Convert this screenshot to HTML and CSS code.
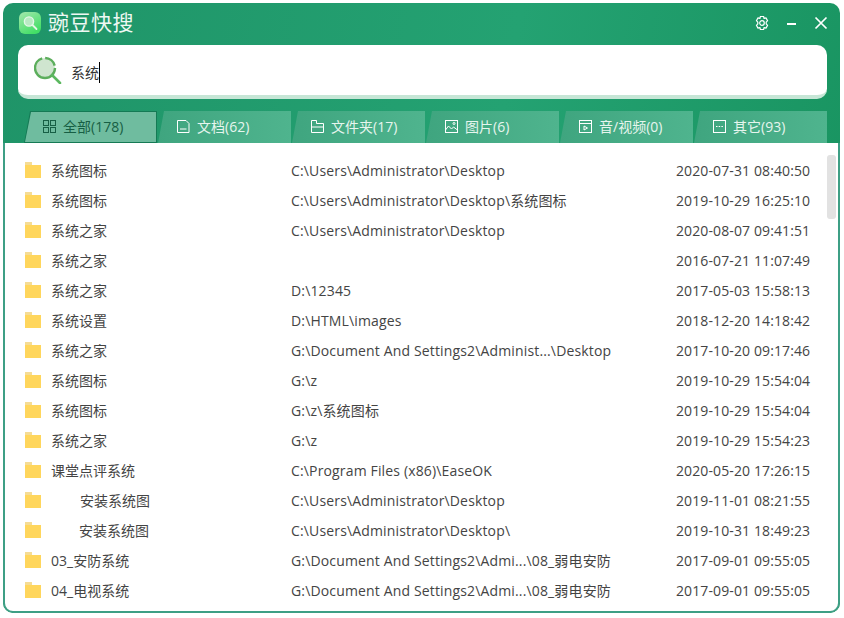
FILE: index.html
```html
<!DOCTYPE html>
<html lang="zh-CN">
<head>
  <meta charset="UTF-8" />
  <title>豌豆快搜</title>
  <link rel="stylesheet" href="styles.css">
</head>
<body>
  <div class="app">
    <div class="titlebar">
      <svg class="logo" width="22" height="22" viewBox="0 0 22 22">
        <defs>
          <linearGradient id="logoBg" x1="0" y1="0" x2="0.6" y2="1">
            <stop offset="0" stop-color="#a5e8ae"/>
            <stop offset="1" stop-color="#42de66"/>
          </linearGradient>
        </defs>
        <rect width="22" height="22" rx="6" fill="url(#logoBg)"/>
        <circle cx="10" cy="9.500" r="4.600" fill="#b9eac4" stroke="#e4f7e8" stroke-width="1.400"/>
        <path d="M13.500 13l4 4" stroke="#e4f7e8" stroke-width="1.800" stroke-linecap="round"/>
      </svg>
      <span class="app-name">豌豆快搜</span>
      <div class="win-btns">
        <svg width="16" height="16" viewBox="0 0 16 16" fill="none" stroke="#fff" stroke-width="1.200">
          <path d="M6.400 1.500h3.200l.5 2 1.900-.6 1.600 2.800-1.400 1.400v1.800l1.400 1.400-1.600 2.800-1.900-.6-.5 2H6.400l-.5-2-1.900.6-1.600-2.800 1.400-1.400V7.100L2.400 5.700 4 2.900l1.900.6z" stroke-linejoin="round"/>
          <circle cx="8" cy="8" r="2.300"/>
        </svg>
        <svg width="12" height="12" viewBox="0 0 12 12"><path d="M1 7h9" stroke="#fff" stroke-width="2"/></svg>
        <svg width="14" height="14" viewBox="0 0 14 14"><path d="M1.500 1.500l11 11M12.500 1.500l-11 11" stroke="#fff" stroke-width="1.700"/></svg>
      </div>
    </div>

    <div class="search-box">
      <svg width="30" height="30" viewBox="0 0 30 30" fill="none">
        <circle cx="11" cy="14" r="10" fill="#cfe5cf" stroke="#5cae5c" stroke-width="2.400" stroke-dasharray="44 3 13 3"/>
        <path d="M18 21l8 8" stroke="#5cb860" stroke-width="2.600" stroke-linecap="round"/>
      </svg>
      <span class="search-text">系统</span><span class="caret"></span>
    </div>

    <div class="tabs">
      <div class="tab active">
        <svg width="15" height="15" viewBox="0 0 15 15" fill="none" stroke="#175f45"><rect x="1.500" y="1.500" width="5" height="5"/><rect x="8.500" y="1.500" width="5" height="5"/><rect x="1.500" y="8.500" width="5" height="5"/><rect x="8.500" y="8.500" width="5" height="5"/></svg>
        <span>全部(178)</span>
      </div>
      <div class="tab">
        <svg width="15" height="15" viewBox="0 0 15 15" fill="none" stroke="#fff"><path d="M1.500 1.500h8.500l3 3v9h-11.500z"/><path d="M4 10h6.500"/></svg>
        <span>文档(62)</span>
      </div>
      <div class="tab">
        <svg width="15" height="15" viewBox="0 0 15 15" fill="none" stroke="#fff"><path d="M1.500 13.500v-12h5v3h7v9z"/><path d="M1.500 8h12"/></svg>
        <span>文件夹(17)</span>
      </div>
      <div class="tab">
        <svg width="15" height="15" viewBox="0 0 15 15" fill="none" stroke="#fff"><rect x="1.500" y="1.500" width="12" height="12"/><path d="M1.500 11l3-4 3 3 2-2 4 3"/><circle cx="10" cy="4.500" r="1"/></svg>
        <span>图片(6)</span>
      </div>
      <div class="tab">
        <svg width="15" height="15" viewBox="0 0 15 15" fill="none" stroke="#fff"><rect x="1.500" y="1.500" width="12" height="12"/><path d="M1.500 4.500h12"/><path d="M6 7l3.500 2L6 11z"/></svg>
        <span>音/视频(0)</span>
      </div>
      <div class="tab">
        <svg width="15" height="15" viewBox="0 0 15 15" fill="none" stroke="#fff"><rect x="1.500" y="1.500" width="12" height="12"/><path d="M4 7.500h1.500M6.700 7.500h1.500M9.400 7.500h1.500"/></svg>
        <span>其它(93)</span>
      </div>
    </div>

    <div class="results">
      <div class="scrollbar"></div>
      <div class="row"><span class="name"><i class="folder"></i>系统图标</span><span class="path">C:\Users\Administrator\Desktop</span><span class="date">2020-07-31 08:40:50</span></div>
      <div class="row"><span class="name"><i class="folder"></i>系统图标</span><span class="path">C:\Users\Administrator\Desktop\系统图标</span><span class="date">2019-10-29 16:25:10</span></div>
      <div class="row"><span class="name"><i class="folder"></i>系统之家</span><span class="path">C:\Users\Administrator\Desktop</span><span class="date">2020-08-07 09:41:51</span></div>
      <div class="row"><span class="name"><i class="folder"></i>系统之家</span><span class="path"></span><span class="date">2016-07-21 11:07:49</span></div>
      <div class="row"><span class="name"><i class="folder"></i>系统之家</span><span class="path">D:\12345</span><span class="date">2017-05-03 15:58:13</span></div>
      <div class="row"><span class="name"><i class="folder"></i>系统设置</span><span class="path">D:\HTML\images</span><span class="date">2018-12-20 14:18:42</span></div>
      <div class="row"><span class="name"><i class="folder"></i>系统之家</span><span class="path">G:\Document And Settings2\Administ...\Desktop</span><span class="date">2017-10-20 09:17:46</span></div>
      <div class="row"><span class="name"><i class="folder"></i>系统图标</span><span class="path">G:\z</span><span class="date">2019-10-29 15:54:04</span></div>
      <div class="row"><span class="name"><i class="folder"></i>系统图标</span><span class="path">G:\z\系统图标</span><span class="date">2019-10-29 15:54:04</span></div>
      <div class="row"><span class="name"><i class="folder"></i>系统之家</span><span class="path">G:\z</span><span class="date">2019-10-29 15:54:23</span></div>
      <div class="row"><span class="name"><i class="folder"></i>课堂点评系统</span><span class="path">C:\Program Files (x86)\EaseOK</span><span class="date">2020-05-20 17:26:15</span></div>
      <div class="row"><span class="name"><i class="folder"></i><b class="indent-a">安装系统图</b></span><span class="path">C:\Users\Administrator\Desktop</span><span class="date">2019-11-01 08:21:55</span></div>
      <div class="row"><span class="name"><i class="folder"></i><b class="indent-b">安装系统图</b></span><span class="path">C:\Users\Administrator\Desktop\</span><span class="date">2019-10-31 18:49:23</span></div>
      <div class="row"><span class="name"><i class="folder"></i>03_安防系统</span><span class="path">G:\Document And Settings2\Admi...\08_弱电安防</span><span class="date">2017-09-01 09:55:05</span></div>
      <div class="row"><span class="name"><i class="folder"></i>04_电视系统</span><span class="path">G:\Document And Settings2\Admi...\08_弱电安防</span><span class="date">2017-09-01 09:55:05</span></div>
    </div>
  </div>
</body>
</html>
```

FILE: styles.css
```css
* {
  box-sizing: border-box;
}
body {
  margin: 0;
  width: 844px;
  height: 618px;
  background: #fff;
  font-family: "Open Sans", "Noto Sans CJK SC", sans-serif;
  overflow: hidden;
}
.app {
  margin: 3px 0 0 3px;
  width: 837px;
  height: 610px;
  border-radius: 10px;
  background: linear-gradient(100deg, #1f9468 0%, #24a272 55%, #17925e 100%);
  display: flex;
  flex-direction: column;
  overflow: hidden;
}

/* title bar */
.titlebar {
  height: 42px;
  flex: none;
  display: flex;
  align-items: center;
  padding: 0 12px 2px 16px;
}
.logo {
  flex: none;
}
.app-name {
  margin-left: 7px;
  font-size: 21px;
  line-height: 30px;
  letter-spacing: 0.5px;
  color: #eef8f3;
  position: relative;
  top: -1px;
}
.win-btns {
  margin-left: auto;
  display: flex;
  align-items: center;
  gap: 16px;
}

/* search */
.search-box {
  flex: none;
  margin: 0 13px 0 15px;
  height: 54px;
  background: #fff;
  border-radius: 10px;
  border-bottom: 4px solid #c6e6d6;
  display: flex;
  align-items: center;
  padding: 0 0 2px 16px;
}
.search-text {
  margin: 6px 0 0 7px;
  font-size: 14px;
  color: #333;
}
.caret {
  margin-top: 6px;
  width: 1px;
  height: 21px;
  background: #000;
}

/* tabs */
.tabs {
  flex: none;
  margin: 12px 0 0 21px;
  height: 32px;
  display: flex;
  gap: 1px;
}
.tab {
  position: relative;
  width: 133px;
  height: 32px;
  padding: 0 0 2px 18px;
  display: flex;
  align-items: center;
  gap: 6px;
  font-size: 14px;
  color: #e6f5ee;
  background: linear-gradient(90deg, #3fa57f, #4fb48e);
  clip-path: polygon(6px 0, 100% 0, 100% 100%, 0 100%);
}
.tab svg,
.tab span {
  position: relative;
}
.tab.active {
  color: #175f45;
  background: #157a55;
}
.tab.active::before {
  content: "";
  position: absolute;
  top: 1px;
  right: 1px;
  bottom: 1px;
  left: 1px;
  background: #6fbc9f;
  clip-path: polygon(6px 0, 100% 0, 100% 100%, 0 100%);
}

/* result list */
.results {
  flex: 1;
  position: relative;
  padding-top: 12px;
  background: #fff;
  border: 2px solid #3e9f85;
  border-top: none;
  border-radius: 0 0 10px 10px;
}
.row {
  height: 30px;
  display: flex;
  align-items: center;
  font-size: 14px;
  color: #444;
  white-space: nowrap;
}
.name {
  width: 286px;
  padding-left: 20px;
  display: flex;
  align-items: center;
  flex: none;
}
.folder {
  position: relative;
  width: 16px;
  height: 13px;
  margin-right: 10px;
  margin-top: 3px;
  background: #ffd65c;
  flex: none;
}
.folder::before {
  content: "";
  position: absolute;
  left: 0;
  top: -3px;
  width: 7px;
  height: 3px;
  background: #f5dc95;
}
.name b {
  font-weight: normal;
}
.indent-a {
  margin-left: 29px;
}
.indent-b {
  margin-left: 28px;
}
.path {
  width: 385px;
  flex: none;
  letter-spacing: 0.15px;
}
.date {
  letter-spacing: 0.11px;
}
.scrollbar {
  position: absolute;
  top: 12px;
  right: 2px;
  width: 9px;
  height: 64px;
  background: #e2e2e2;
  border-radius: 3px;
}
```
